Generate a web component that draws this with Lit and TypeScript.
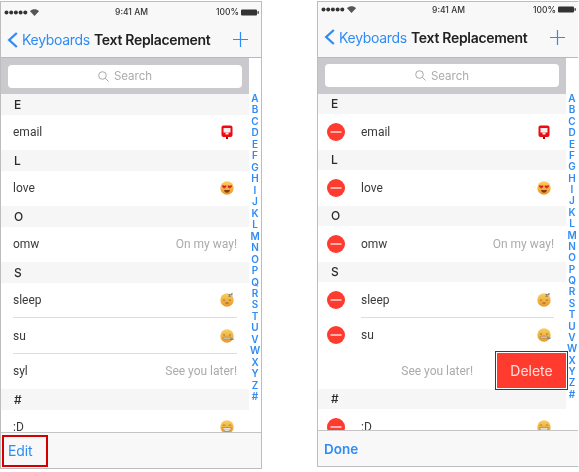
import { LitElement, html, css, svg, nothing } from "lit";
import { customElement, property } from "lit/decorators.js";

type Row = { key: string; value?: string; icon?: string };
const SECTIONS: { title: string; rows: Row[] }[] = [
  { title: "E", rows: [{ key: "email", icon: "mail" }] },
  { title: "L", rows: [{ key: "love", icon: "love" }] },
  { title: "O", rows: [{ key: "omw", value: "On my way!" }] },
  { title: "S", rows: [
    { key: "sleep", icon: "sleep" },
    { key: "su", icon: "su" },
    { key: "syl", value: "See you later!" },
  ] },
  { title: "#", rows: [{ key: ":D", icon: "grin" }] },
];
const LETTERS = "ABCDEFGHIJKLMNOPQRSTUVWXYZ#".split("");

const face = (inner: unknown) => svg`<svg class="emoji" viewBox="0 0 14 14">
  <defs><linearGradient id="g" x1="0" y1="0" x2="0" y2="1"><stop offset="0" stop-color="#f8cf5e"/><stop offset="1" stop-color="#e9992c"/></linearGradient></defs>
  <circle cx="7" cy="7" r="6.7" fill="url(#g)"/>${inner}</svg>`;

function icon(name?: string) {
  switch (name) {
    case "mail":
      return svg`<svg class="emoji" viewBox="0 0 14 14">
        <rect x="6" y="11" width="2" height="3" fill="#a80000"/>
        <rect x="1.500" y="0.500" width="11" height="11.500" rx="2" fill="#ee0a10"/>
        <rect x="3.500" y="3" width="7" height="4.500" fill="#f4eeee"/>
        <rect x="5.500" y="7.500" width="3" height="2" fill="#f4eeee"/></svg>`;
    case "love":
      return face(svg`
        <path d="M2 4.800c.8-.9 1.900-.4 2.300.1.500-.6 1.700-.9 2.100 0 .3 1-1.300 2-2.100 2.600-.9-.5-2.700-1.500-2.300-2.700z" fill="#e3202a"/>
        <path d="M7.600 4.900c.4-.9 1.600-.6 2.100 0 .4-.5 1.500-1 2.300-.1.400 1.200-1.400 2.200-2.300 2.700-.8-.6-2.400-1.600-2.100-2.600z" fill="#e3202a"/>
        <path d="M4 9h6c-.4 2.100-1.800 2.700-3 2.700S4.400 11.100 4 9z" fill="#8a3d10"/>`);
    case "sleep":
      return face(svg`
        <path d="M3 6.800c.6.600 1.500.6 2.100 0M8.900 6.800c.6.600 1.500.6 2.100 0" stroke="#8a5416" stroke-width=".8" fill="none"/>
        <path d="M5.500 10h3" stroke="#8a5416" stroke-width=".9"/>
        <path d="M8.500 1.500h2.200l-2 1.800h2.200M11 .6h1.500l-1.300 1.200h1.500" stroke="#556" stroke-width=".6" fill="none"/>`);
    case "su":
      return face(svg`
        <path d="M3.200 5.800l1.800.4M10.800 5.800l-1.800.4" stroke="#8a5416" stroke-width=".8"/>
        <rect x="3" y="8.200" width="8" height="2" rx="1" fill="#cfcfc8" stroke="#7c5a2a" stroke-width=".4"/>
        <rect x="10" y="9.500" width="3.600" height="1.300" fill="#77808a"/>`);
    case "grin":
      return face(svg`
        <path d="M3 5.400c.5-.8 1.500-.8 2 0M9 5.400c.5-.8 1.500-.8 2 0" stroke="#8a5416" stroke-width=".8" fill="none"/>
        <path d="M2.800 7.500h8.400c0 2.700-2 4-4.200 4s-4.200-1.300-4.200-4z" fill="#f7f4ea" stroke="#8a5416" stroke-width=".5"/>
        <path d="M3 9.300h8M5 7.500v3.800M7 7.500v4M9 7.500v3.800" stroke="#a8a294" stroke-width=".35"/>`);
  }
  return nothing;
}

@customElement("phone-screen")
class PhoneScreen extends LitElement {
  @property() mode = "view";

  static styles = css`
    :host {
      display: block;
      box-sizing: border-box;
      border: 1px solid #bdbdbd;
      height: 468px;
      width: 262px;
      background: #fff;
      font-family: Inter, "Liberation Sans", sans-serif;
      color: #2b2b2b;
      overflow: hidden;
    }
    :host([mode="edit"]) {
      height: 466px;
      border-right-color: transparent;
    }
    .screen { display: flex; flex-direction: column; height: 100%; filter: blur(0.35px); }
    .status {
      height: 20px;
      display: grid;
      grid-template-columns: 1fr auto 1fr;
      align-items: center;
      padding: 0 2px 0 3px;
      font-size: 8.5px;
      font-weight: 500;
      color: #333;
      background: #f8f8f8;
      flex: none;
    }
    .edit .status { height: 15px; }
    .status .l, .status .r { display: flex; align-items: center; gap: 2px; }
    .status .r { justify-content: flex-end; }
    .nav {
      flex: none;
      height: 35px;
      background: #f8f8f8;
      border-bottom: 1px solid #b9b9bb;
      display: flex;
      align-items: center;
      padding: 0 13px 0 6px;
      font-size: 14px;
    }
    .edit .nav { height: 40px; }
    .back { color: #2f8cf5; display: flex; align-items: center; gap: 3px; font-size: 14px; letter-spacing: -0.3px; }
    .title { flex: 1; font-weight: 600; color: #222; margin-left: 4px; font-size: 14px; letter-spacing: -0.3px; }
    .body {
      flex: 1;
      min-height: 0;
      display: grid;
      grid-template-columns: 248px 12px;
      overflow: hidden;
    }
    .list { display: flex; flex-direction: column; }
    .band {
      flex: none;
      height: 36px;
      background: #c9c9ce;
      display: flex;
      align-items: center;
      padding: 0 7px;
      box-sizing: border-box;
    }
    .edit .band { height: 35.5px; }
    .search {
      flex: 1;
      height: 23px;
      background: #fff;
      border-radius: 4px;
      color: #ababab;
      font-size: 11.5px;
      display: flex;
      align-items: center;
      justify-content: center;
      gap: 5px;
    }
    .head {
      flex: none;
      height: 20.5px;
      background: #f6f6f7;
      display: flex;
      align-items: center;
      padding-left: 13px;
      font-size: 12px;
      font-weight: 500;
      box-sizing: border-box;
    }
    .row {
      flex: none;
      height: 35.5px;
      background: #fff;
      display: flex;
      align-items: center;
      padding: 0 12px;
      font-family: Roboto, "Liberation Sans", sans-serif;
      font-size: 12px;
      box-sizing: border-box;
    }
    .cells { flex: 1; display: flex; align-items: center; justify-content: space-between; align-self: stretch; }
    .row.sep .cells { border-top: 1px solid #dedee0; margin-top: -1px; }
    .key { color: #3a3a3a; }
    .value { color: #ababab; }
    .emoji { width: 14px; height: 14px; display: block; margin-right: 3px; }
    .minus { flex: none; width: 18px; height: 18px; margin-right: 16px; margin-left: -3px; }
    .edit .row.swiped { padding-right: 0; justify-content: flex-end; gap: 22px; }
    .delete {
      flex: none;
      box-sizing: border-box;
      width: 73px;
      height: 39px;
      margin-right: -2px;
      border: 1px solid #a80c0c;
      outline: 1px solid #fff;
      outline-offset: -2px;
      background: #ff3b30;
      color: #fbe3df;
      font-family: Inter, "Liberation Sans", sans-serif;
      font-size: 14px;
      display: flex;
      align-items: center;
      justify-content: center;
      z-index: 1;
    }
    .index {
      display: flex;
      flex-direction: column;
      align-items: center;
      padding-top: 35px;
      color: #2f8cf5;
      font-size: 10px;
      font-weight: 600;
      line-height: 11.47px;
      background: #fff;
    }
    .edit .index { line-height: 11.37px; }
    .toolbar {
      flex: none;
      height: 35px;
      background: #f8f8f8;
      border-top: 1px solid #c4c4c6;
      display: flex;
      align-items: center;
      font-size: 14px;
      color: #2f8cf5;
    }
    .edit .toolbar { font-weight: 600; padding-left: 6px; font-size: 13.5px; }
    .editbtn {
      box-sizing: border-box;
      margin-left: 1px;
      width: 46px;
      height: 32px;
      border: 2px solid #d40000;
      display: flex;
      align-items: center;
      padding-left: 4px;
      letter-spacing: -0.1px;
    }
  `;

  private renderRow(r: Row, first: boolean) {
    const edit = this.mode === "edit";
    if (edit && r.key === "syl") {
      return html`<div class="row swiped"><span class="value">${r.value}</span><div class="delete">Delete</div></div>`;
    }
    return html`<div class="row ${first ? "" : "sep"}">
      ${edit ? html`<svg class="minus" viewBox="0 0 18 18"><circle cx="9" cy="9" r="9" fill="#ff3b30"/><rect x="3.500" y="8.300" width="11" height="1.400" fill="#fde6e3"/></svg>` : nothing}
      <div class="cells">
        <span class="key">${r.key}</span>
        ${r.value ? html`<span class="value">${r.value}</span>` : icon(r.icon)}
      </div>
    </div>`;
  }

  render() {
    const edit = this.mode === "edit";
    return html`<div class="screen ${edit ? "edit" : ""}">
      <div class="status">
        <div class="l">
          <svg width="24" height="5" viewBox="0 0 24 5"><g fill="#333"><circle cx="2.500" cy="2.500" r="2"/><circle cx="7.200" cy="2.500" r="2"/><circle cx="11.900" cy="2.500" r="2"/><circle cx="16.600" cy="2.500" r="2"/><circle cx="21.300" cy="2.500" r="2"/></g></svg>
          <svg width="9" height="7" viewBox="0 0 9 7"><path d="M4.500 7L0 2.200C2.600-.4 6.400-.4 9 2.200z" fill="#555"/></svg>
        </div>
        <div>9:41 AM</div>
        <div class="r">100%
          <svg width="18" height="7" viewBox="0 0 18 7"><rect x="0" y="0.500" width="16" height="6" rx="1" fill="#333"/><rect x="16.500" y="2.200" width="1.300" height="2.600" fill="#333"/></svg>
        </div>
      </div>
      <div class="nav">
        <div class="back">
          <svg width="12" height="16" viewBox="0 0 12 16"><path d="M9.800 1L2.200 8l7.600 7" stroke="#2f8cf5" stroke-width="2.300" fill="none"/></svg>
          Keyboards
        </div>
        <div class="title">Text Replacement</div>
        <svg width="15" height="15" viewBox="0 0 15 15"><path d="M7.500 0v15M0 7.500h15" stroke="#2f8cf5" stroke-width="1.200"/></svg>
      </div>
      <div class="body">
        <div class="list">
          <div class="band"><div class="search">
            <svg width="11" height="11" viewBox="0 0 11 11"><circle cx="4.500" cy="4.500" r="3.800" stroke="#a8a8a8" fill="none"/><path d="M7.300 7.300L10.500 10.500" stroke="#a8a8a8"/></svg>
            Search
          </div></div>
          ${SECTIONS.map((s) => html`<div class="head">${s.title}</div>${s.rows.map((r, i) => this.renderRow(r, i === 0))}`)}
        </div>
        <div class="index">${LETTERS.map((l) => html`<span>${l}</span>`)}</div>
      </div>
      <div class="toolbar">
        ${edit ? html`Done` : html`<div class="editbtn">Edit</div>`}
      </div>
    </div>`;
  }
}

@customElement("app-root")
class AppRoot extends LitElement {
  static styles = css`
    :host {
      display: flex;
      align-items: flex-start;
      gap: 55px;
      padding: 1px 0 0 0;
      width: 579px;
      height: 472px;
      box-sizing: border-box;
      background: #fff;
      overflow: hidden;
    }
  `;
  render() {
    return html`<phone-screen mode="view"></phone-screen><phone-screen mode="edit"></phone-screen>`;
  }
}
